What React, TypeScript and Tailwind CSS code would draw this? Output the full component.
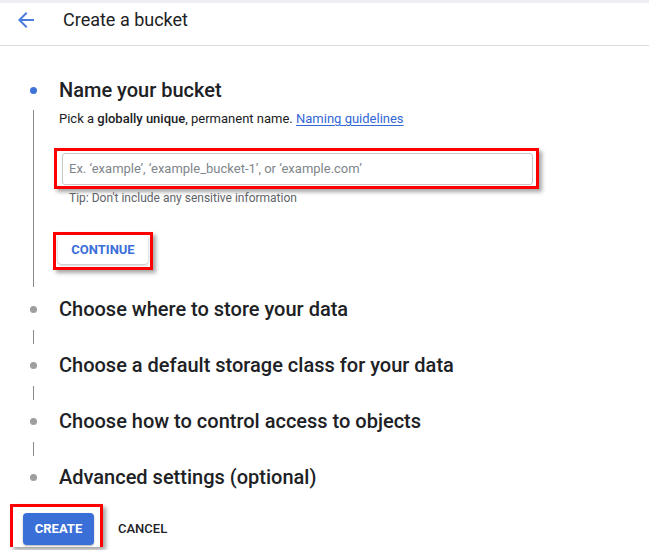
import React from "react";

const steps = [
  "Choose where to store your data",
  "Choose a default storage class for your data",
  "Choose how to control access to objects",
  "Advanced settings (optional)",
];

function ArrowBack() {
  return (
    <svg width="24" height="24" viewBox="0 0 24 24" className="fill-[#4a7ce0]">
      <path d="M20 11H7.83l5.59-5.59L12 4l-8 8 8 8 1.41-1.41L7.83 13H20v-2z" />
    </svg>
  );
}

export default function App() {
  return (
    <div className="h-[550px] w-[649px] overflow-hidden bg-white font-['Roboto',sans-serif] text-[#202124]">
      {/* header */}
      <header className="flex h-[46px] items-start border-t-[3px] border-b border-t-[#eceef1] border-b-[#dadce0] pt-[5px]">
        <div className="ml-[14px] flex h-6 w-6 items-center">
          <ArrowBack />
        </div>
        <h1 className="ml-[25px] text-[18px] leading-6">Create a bucket</h1>
      </header>

      <div className="pt-[32px]">
        {/* step 1 */}
        <div className="flex h-6 items-center">
          <div className="flex w-[59px] justify-start pl-[30px]">
            <span className="h-[7px] w-[7px] rounded-full bg-[#3f73d8]" />
          </div>
          <h2 className="text-[20px] font-medium leading-6">Name your bucket</h2>
        </div>
        <div className="mt-[8px] flex">
          <div className="flex w-[59px] pl-[33px]">
            <div className="w-px bg-[#8a8a8a]" />
          </div>
          <div className="pb-[17px]">
            <p className="text-[13px] leading-[18px]">
              Pick a <span className="font-medium">globally unique</span>, permanent name.{" "}
              <a className="text-[#3367d6] underline underline-offset-2" href="#">
                Naming guidelines
              </a>
            </p>
            <div className="-ml-[5px] mt-[20px] w-[485px] border-[3px] border-[#f00] pb-[1px] pl-[5px] pr-[3px] pt-[2px] shadow-[3px_3px_4px_rgba(0,0,0,0.35)]">
              <div className="flex h-[32px] items-center rounded-[3px] border border-[#c8c8c8] pl-[6px] text-[13px] text-[#80868b]">
                Ex. ‘example’, ‘example_bucket-1’, or ‘example.com’
              </div>
            </div>
            <p className="ml-[10px] mt-[1px] text-[12px] leading-4 text-[#5f6368]">
              Tip: Don't include any sensitive information
            </p>
            <div className="-ml-[6px] mt-[26px] w-[100px] border-[3px] border-[#f00] pb-[3px] pl-[2px] pr-[2px] shadow-[3px_3px_4px_rgba(0,0,0,0.35)]">
              <button className="h-[29px] w-[90px] rounded-[4px] bg-white text-[13px] font-bold text-[#3b6fd8] shadow-[0_1px_3px_rgba(0,0,0,0.3)]">
                CONTINUE
              </button>
            </div>
          </div>
        </div>

        {/* remaining steps */}
        <div className="mt-[10px]">
          {steps.map((label, i) => (
            <div key={label}>
              <div className="flex h-6 items-center">
                <div className="flex w-[59px] pl-[30px]">
                  <span className="h-[7px] w-[7px] rounded-full bg-[#9e9e9e]" />
                </div>
                <h2 className="text-[20px] font-medium leading-6">{label}</h2>
              </div>
              {i < steps.length - 1 && (
                <div className="flex h-[32px] items-center pl-[33px]">
                  <div className="h-[14px] w-px bg-[#8a8a8a]" />
                </div>
              )}
            </div>
          ))}
        </div>

        {/* actions */}
        <div className="mt-[15px] flex items-center">
          <div className="ml-[10px] border-[3px] border-b-0 border-[#f00] pl-[10px] pr-[6px] pt-[6px] pb-[2px] shadow-[3px_3px_4px_rgba(0,0,0,0.35)]">
            <button className="h-[32px] w-[71px] rounded-[4px] bg-[#3b6fd8] text-[13px] font-bold text-white shadow-[0_1px_2px_rgba(0,0,0,0.3)]">
              CREATE
            </button>
          </div>
          <button className="ml-[15px] mt-[6px] text-[13px] font-medium">CANCEL</button>
        </div>
      </div>
    </div>
  );
}
